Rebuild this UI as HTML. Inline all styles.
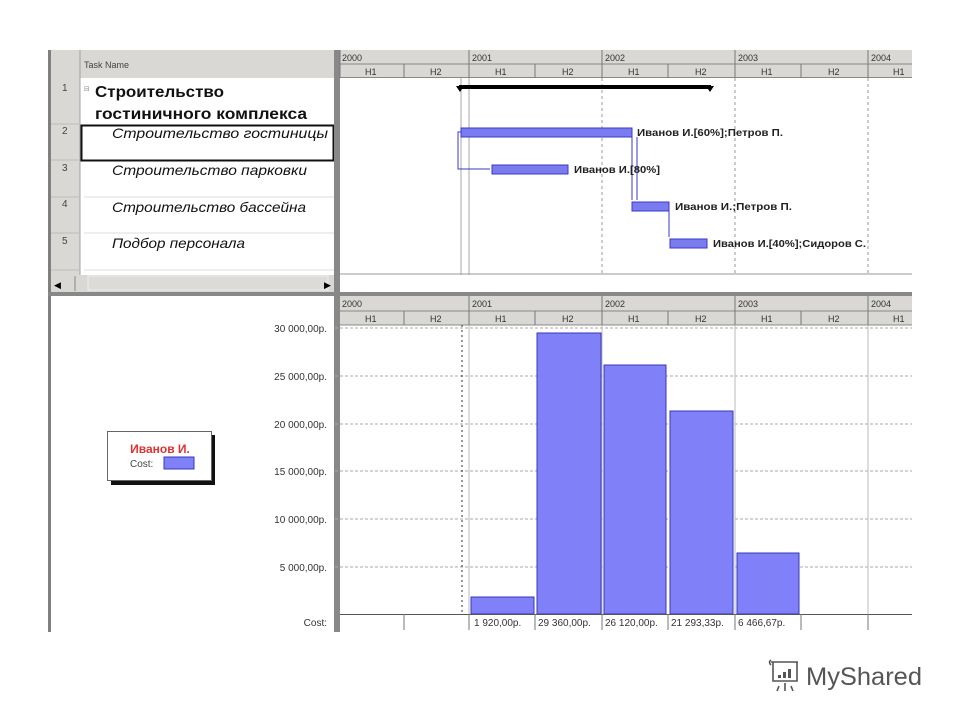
<!DOCTYPE html>
<html><head><meta charset="utf-8"><style>
html,body{margin:0;padding:0;background:#fff;width:960px;height:720px;overflow:hidden}
svg{position:absolute;left:0;top:0}
text{font-family:"Liberation Sans","DejaVu Sans",sans-serif}
</style></head><body>
<svg width="960" height="720" viewBox="0 0 960 720">
<rect x="48" y="50" width="864" height="582" fill="#fff"/>
<rect x="48" y="50" width="3" height="582" fill="#808080"/>
<rect x="51" y="50" width="29" height="225" fill="#d9d8d4"/>
<rect x="80" y="50" width="254" height="28" fill="#d9d8d4"/>
<line x1="80" y1="50" x2="80" y2="275" stroke="#a0a0a0"/>
<text x="84" y="68" font-size="9" fill="#444">Task Name</text>
<g font-size="10" fill="#444">
<text x="62" y="91">1</text><text x="62" y="134">2</text><text x="62" y="171">3</text><text x="62" y="207">4</text><text x="62" y="244">5</text>
</g>
<g stroke="#bbb"><line x1="51" y1="124" x2="80" y2="124"/><line x1="51" y1="160" x2="80" y2="160"/><line x1="51" y1="197" x2="80" y2="197"/><line x1="51" y1="233" x2="80" y2="233"/><line x1="51" y1="270" x2="80" y2="270"/></g>
<g stroke="#ddd"><line x1="84" y1="197" x2="334" y2="197"/><line x1="84" y1="233" x2="334" y2="233"/><line x1="84" y1="270" x2="334" y2="270"/></g>
<text x="84" y="91" font-size="7" fill="#888">⊟</text>
<text x="95" y="97" font-size="16" font-weight="bold" fill="#111" textLength="129" lengthAdjust="spacingAndGlyphs">Строительство</text>
<text x="95" y="119" font-size="16" font-weight="bold" fill="#111" textLength="212" lengthAdjust="spacingAndGlyphs">гостиничного комплекса</text>
<rect x="81.5" y="125.5" width="252" height="35" fill="none" stroke="#111" stroke-width="2"/>
<g font-size="14" font-style="italic" fill="#111">
<text x="112" y="138" textLength="216" lengthAdjust="spacingAndGlyphs">Строительство гостиницы</text>
<text x="112" y="175" textLength="195" lengthAdjust="spacingAndGlyphs">Строительство парковки</text>
<text x="112" y="212" textLength="194" lengthAdjust="spacingAndGlyphs">Строительство бассейна</text>
<text x="112" y="248" textLength="133" lengthAdjust="spacingAndGlyphs">Подбор персонала</text>
</g>
<rect x="51" y="275" width="283" height="17" fill="#d9d8d4"/>
<rect x="88" y="276" width="240" height="14" fill="#dcdbd7" stroke="#eee"/>
<text x="54" y="288" font-size="9">◀</text><text x="324" y="288" font-size="9">▶</text>
<line x1="75" y1="276" x2="75" y2="291" stroke="#888"/>
<rect x="334" y="50" width="6" height="246" fill="#888"/>
<rect x="48" y="292" width="864" height="4" fill="#888"/>

<rect x="340" y="50" width="572" height="28" fill="#d9d8d4"/>
<line x1="340" y1="64" x2="912" y2="64" stroke="#888"/>
<line x1="340" y1="77.5" x2="912" y2="77.5" stroke="#888"/>
<g stroke="#777">
<line x1="340" y1="50" x2="340" y2="78"/><line x1="469" y1="50" x2="469" y2="78"/><line x1="602" y1="50" x2="602" y2="78"/><line x1="735" y1="50" x2="735" y2="78"/><line x1="868" y1="50" x2="868" y2="78"/>
<line x1="404" y1="64" x2="404" y2="78"/><line x1="535" y1="64" x2="535" y2="78"/><line x1="668" y1="64" x2="668" y2="78"/><line x1="801" y1="64" x2="801" y2="78"/>
</g>
<g font-size="9" fill="#333">
<text x="342" y="61">2000</text><text x="472" y="61">2001</text><text x="605" y="61">2002</text><text x="738" y="61">2003</text><text x="871" y="61">2004</text>
<text x="365" y="75">H1</text><text x="430" y="75">H2</text><text x="495" y="75">H1</text><text x="562" y="75">H2</text><text x="628" y="75">H1</text><text x="695" y="75">H2</text><text x="761" y="75">H1</text><text x="828" y="75">H2</text><text x="893" y="75">H1</text>
</g>
<g stroke="#999" stroke-dasharray="3,3"><line x1="602" y1="78" x2="602" y2="275"/><line x1="735" y1="78" x2="735" y2="275"/><line x1="868" y1="78" x2="868" y2="275"/></g>
<line x1="461" y1="78" x2="461" y2="275" stroke="#aaa"/><line x1="469" y1="78" x2="469" y2="275" stroke="#aaa"/>
<line x1="340" y1="274" x2="912" y2="274" stroke="#999"/>
<rect x="459" y="85" width="252" height="4" fill="#000"/>
<path d="M456 86 L464 86 L460 92Z M706 86 L714 86 L710 92Z" fill="#000"/>
<g fill="#7b7bf0" stroke="#3838c8">
<rect x="461" y="128" width="171" height="9"/>
<rect x="492" y="165" width="76" height="9"/>
<rect x="632" y="202" width="37" height="9"/>
<rect x="670" y="239" width="37" height="9"/>
</g>
<g fill="none" stroke="#3838c8">
<path d="M461 132 H458 V169 H490"/>
<path d="M632 137 V200 M637 137 V200"/>
<path d="M669 211 V237"/>
</g>
<g font-size="10" font-weight="bold" fill="#222">
<text x="637" y="136" textLength="146" lengthAdjust="spacingAndGlyphs">Иванов И.[60%];Петров П.</text>
<text x="574" y="173" textLength="86" lengthAdjust="spacingAndGlyphs">Иванов И.[80%]</text>
<text x="675" y="210" textLength="117" lengthAdjust="spacingAndGlyphs">Иванов И.;Петров П.</text>
<text x="713" y="247" textLength="153" lengthAdjust="spacingAndGlyphs">Иванов И.[40%];Сидоров С.</text>
</g>

<rect x="334" y="296" width="6" height="336" fill="#888"/>
<rect x="340" y="296" width="572" height="29" fill="#d9d8d4"/>
<line x1="340" y1="311" x2="912" y2="311" stroke="#888"/>
<line x1="340" y1="325" x2="912" y2="325" stroke="#888"/>
<g stroke="#777">
<line x1="469" y1="296" x2="469" y2="325"/><line x1="602" y1="296" x2="602" y2="325"/><line x1="735" y1="296" x2="735" y2="325"/><line x1="868" y1="296" x2="868" y2="325"/>
<line x1="404" y1="311" x2="404" y2="325"/><line x1="535" y1="311" x2="535" y2="325"/><line x1="668" y1="311" x2="668" y2="325"/><line x1="801" y1="311" x2="801" y2="325"/>
</g>
<g font-size="9" fill="#333">
<text x="342" y="307">2000</text><text x="472" y="307">2001</text><text x="605" y="307">2002</text><text x="738" y="307">2003</text><text x="871" y="307">2004</text>
<text x="365" y="322">H1</text><text x="430" y="322">H2</text><text x="495" y="322">H1</text><text x="562" y="322">H2</text><text x="628" y="322">H1</text><text x="695" y="322">H2</text><text x="761" y="322">H1</text><text x="828" y="322">H2</text><text x="893" y="322">H1</text>
</g>
<g stroke="#aaa" stroke-dasharray="3,2">
<line x1="335" y1="328" x2="912" y2="328"/><line x1="335" y1="376" x2="912" y2="376"/><line x1="335" y1="424" x2="912" y2="424"/><line x1="335" y1="471" x2="912" y2="471"/><line x1="335" y1="519" x2="912" y2="519"/><line x1="335" y1="567" x2="912" y2="567"/>
</g>
<line x1="462" y1="325" x2="462" y2="614" stroke="#333" stroke-dasharray="2,3"/>
<g stroke="#bbb"><line x1="469" y1="325" x2="469" y2="614"/><line x1="602" y1="325" x2="602" y2="614"/><line x1="735" y1="325" x2="735" y2="614"/><line x1="868" y1="325" x2="868" y2="614"/></g>
<g font-size="10" fill="#333" text-anchor="end">
<text x="327" y="332">30 000,00р.</text><text x="327" y="380">25 000,00р.</text><text x="327" y="428">20 000,00р.</text><text x="327" y="475">15 000,00р.</text><text x="327" y="523">10 000,00р.</text><text x="327" y="571">5 000,00р.</text><text x="327" y="626">Cost:</text>
</g>
<g fill="#8080f8" stroke="#3838b8">
<rect x="471" y="597" width="63" height="17"/>
<rect x="537" y="333" width="64" height="281"/>
<rect x="604" y="365" width="62" height="249"/>
<rect x="670" y="411" width="63" height="203"/>
<rect x="737" y="553" width="62" height="61"/>
</g>
<line x1="340" y1="614.5" x2="912" y2="614.5" stroke="#555"/>
<g stroke="#777"><line x1="404" y1="614" x2="404" y2="630"/><line x1="469" y1="614" x2="469" y2="630"/><line x1="535" y1="614" x2="535" y2="630"/><line x1="602" y1="614" x2="602" y2="630"/><line x1="668" y1="614" x2="668" y2="630"/><line x1="735" y1="614" x2="735" y2="630"/><line x1="801" y1="614" x2="801" y2="630"/><line x1="868" y1="614" x2="868" y2="630"/></g>
<g font-size="10" fill="#333">
<text x="474" y="626">1 920,00р.</text><text x="538" y="626">29 360,00р.</text><text x="605" y="626">26 120,00р.</text><text x="671" y="626">21 293,33р.</text><text x="738" y="626">6 466,67р.</text>
</g>
<rect x="111" y="435" width="104" height="50" fill="#111"/>
<rect x="107.5" y="431.5" width="104" height="49" fill="#fff" stroke="#666"/>
<text x="160" y="453" font-size="12" font-weight="bold" fill="#e03030" text-anchor="middle">Иванов И.</text>
<text x="130" y="467" font-size="10" fill="#444">Cost:</text>
<rect x="164" y="457" width="30" height="12" fill="#8080f8" stroke="#3838b8"/>

<g stroke="#555" fill="none" stroke-width="1.6">
<path d="M771 662 H798 M773 662 V681 H797 V662"/>
<path d="M771 660 q-3 2 0 5"/>
<path d="M779 686 l-2 5 M785 683 v8 M791 686 l2 5"/>
</g>
<g fill="#555"><rect x="778" y="675" width="3" height="3"/><rect x="783" y="672" width="3" height="6"/><rect x="788" y="669" width="3" height="9"/></g>
<text x="806" y="685" font-size="25" fill="#555" textLength="116" lengthAdjust="spacingAndGlyphs">MyShared</text>
</svg>
</body></html>
